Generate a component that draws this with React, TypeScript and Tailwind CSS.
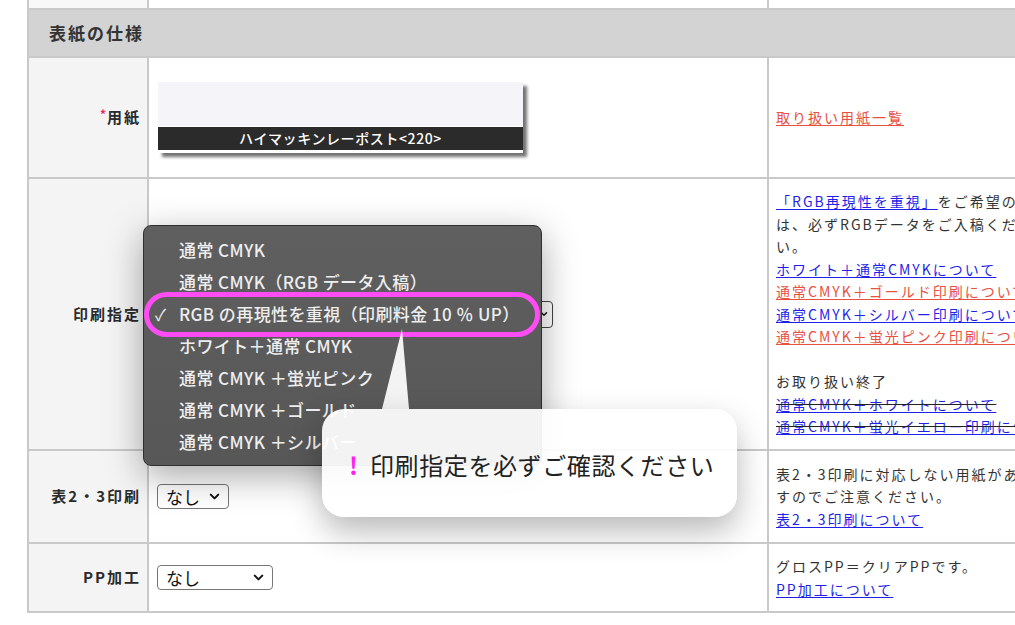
import { ChevronDown } from "lucide-react";

const blue = "text-[#1f1fe8] underline decoration-[#1f1fe8] underline-offset-[2px]";
const red = "text-[#e8503f] underline decoration-[#e8503f] underline-offset-[2px]";

function Label({ children }: { children: React.ReactNode }) {
  return (
    <div className="bg-[#f4f4f4] flex items-center justify-end pr-[6px] text-[15px] font-bold tracking-[2px] text-[#2a2a2a]">
      {children}
    </div>
  );
}

function Note({ children }: { children: React.ReactNode }) {
  return (
    <div className="bg-white flex flex-col justify-center pl-[7px] text-[14px] tracking-[2px] leading-[22.5px] whitespace-nowrap text-[#333] overflow-hidden">
      {children}
    </div>
  );
}

function FakeSelect({ w, text }: { w: string; text: string }) {
  return (
    <div
      className={`${w} h-[25px] border border-[#767676] rounded-[4px] bg-white flex items-center justify-between pl-[8px] pr-[6px] text-[17px] text-[#111]`}
    >
      <span>{text}</span>
      <ChevronDown size={15} strokeWidth={3.2} className="text-[#111]" />
    </div>
  );
}

const menuItems = [
  "通常 CMYK",
  "通常 CMYK（RGB データ入稿）",
  "RGB の再現性を重視（印刷料金 10 ％ UP）",
  "ホワイト＋通常 CMYK",
  "通常 CMYK ＋蛍光ピンク",
  "通常 CMYK ＋ゴールド",
  "通常 CMYK ＋シルバー",
];

export default function App() {
  return (
    <div className="relative w-[1015px] h-[625px] overflow-hidden bg-white font-['Noto_Sans_CJK_JP',sans-serif] text-[#333]">
      <div className="ml-[27px] w-[1100px] bg-[#c9c9c9] pl-[2px] pb-[2px] grid grid-cols-[118px_618px_360px] grid-rows-[8px_46px_119px_270px_91px_67px] gap-[2px]">
        {/* partial top row */}
        <div className="bg-[#f8f8f8]" />
        <div className="bg-white" />
        <div className="bg-white" />

        {/* header */}
        <div className="col-span-3 bg-[#d3d3d3] flex items-center pl-[20px] text-[17px] font-bold tracking-[2px] text-[#333]">
          表紙の仕様
        </div>

        {/* 用紙 */}
        <Label>
          <span className="text-[#e8245e] text-[12px] self-start mt-[47px] mr-[1px] tracking-normal">*</span>
          用紙
        </Label>
        <div className="bg-white flex items-center pl-[9px]">
          <div className="w-[365px] flex flex-col shadow-[4px_4px_3px_rgba(0,0,0,0.55)]">
            <div className="h-[44px] bg-[#f4f4f9]" />
            <div className="h-[1px] bg-white" />
            <div className="h-[23px] bg-[#2b2b2b] text-white text-[14px] font-medium leading-[23px] text-center tracking-[0.6px]">
              ハイマッキンレーポスト&lt;220&gt;
            </div>
            <div className="h-[3px] bg-white" />
          </div>
        </div>
        <Note>
          <a className={red}>取り扱い用紙一覧</a>
        </Note>

        {/* 印刷指定 */}
        <Label>印刷指定</Label>
        <div className="bg-white flex items-center pl-[8px]">
          <div className="w-[396px] h-[27px] border border-[#444] rounded-[4px] bg-white flex items-center justify-end pr-[3px]">
            <ChevronDown size={10} strokeWidth={3.5} className="text-[#111]" />
          </div>
        </div>
        <Note>
          <div>
            <a className={blue}>「RGB再現性を重視」</a>をご希望の方
          </div>
          <div>は、必ずRGBデータをご入稿くださ</div>
          <div>い。</div>
          <div>
            <a className={blue}>ホワイト＋通常CMYKについて</a>
          </div>
          <div>
            <a className={red}>通常CMYK＋ゴールド印刷について</a>
          </div>
          <div>
            <a className={blue}>通常CMYK＋シルバー印刷について</a>
          </div>
          <div>
            <a className={red}>通常CMYK＋蛍光ピンク印刷について</a>
          </div>
          <div className="h-[22.5px]" />
          <div>お取り扱い終了</div>
          <div>
            <a className={blue}>
              <span className="line-through decoration-[#222]">通常CMYK＋ホワイトについて</span>
            </a>
          </div>
          <div>
            <a className={blue}>
              <span className="line-through decoration-[#222]">通常CMYK＋蛍光イエロー印刷について</span>
            </a>
          </div>
        </Note>

        {/* 表2・3印刷 */}
        <Label>表2・3印刷</Label>
        <div className="bg-white flex items-center pl-[8px]">
          <FakeSelect w="w-[72px]" text="なし" />
        </div>
        <Note>
          <div>表2・3印刷に対応しない用紙があります</div>
          <div>すのでご注意ください。</div>
          <div>
            <a className={blue}>表2・3印刷について</a>
          </div>
        </Note>

        {/* PP加工 */}
        <Label>PP加工</Label>
        <div className="bg-white flex items-center pl-[8px]">
          <FakeSelect w="w-[116px]" text="なし" />
        </div>
        <Note>
          <div>グロスPP＝クリアPPです。</div>
          <div>
            <a className={blue}>PP加工について</a>
          </div>
        </Note>
      </div>

      {/* dropdown menu overlay */}
      <div className="absolute left-[143px] top-[225px] w-[399px] h-[241px] rounded-[8px] border border-[#2f2f2f] bg-gradient-to-b from-[#5f5f5f] to-[#575757] shadow-[0_10px_36px_rgba(0,0,0,0.35)] pt-[8px]">
        {menuItems.map((t, i) => (
          <div key={i} className="h-[32px] flex items-center pl-[11px] text-[17px] font-medium text-[#eeeeee] tracking-[0.4px] whitespace-nowrap">
            <span className="w-[24px] text-[16px] font-normal">{i === 2 ? "✓" : ""}</span>
            <span>{t}</span>
          </div>
        ))}
      </div>

      {/* magenta ring */}
      <div className="absolute left-[144px] top-[292px] w-[396px] h-[45px] rounded-full border-[5px] border-[#ff4cf4]" />

      {/* callout tail */}
      <svg className="absolute left-[380px] top-[329px]" width="32" height="80" viewBox="0 0 32 80">
        <polygon points="22,0 2,80 29,80" fill="rgba(255,255,255,0.93)" />
      </svg>

      {/* callout bubble */}
      <div className="absolute left-[322px] top-[409px] w-[415px] h-[108px] rounded-[22px] bg-white/[0.93] shadow-[0_14px_32px_rgba(0,0,0,0.28)] flex items-center pl-[27px] pt-[3px]">
        <span className="text-[#ff1ff0] text-[24px] font-bold w-[21px]">!</span>
        <span className="text-[24px] text-[#222] tracking-[0.6px]">印刷指定を必ずご確認ください</span>
      </div>
    </div>
  );
}
